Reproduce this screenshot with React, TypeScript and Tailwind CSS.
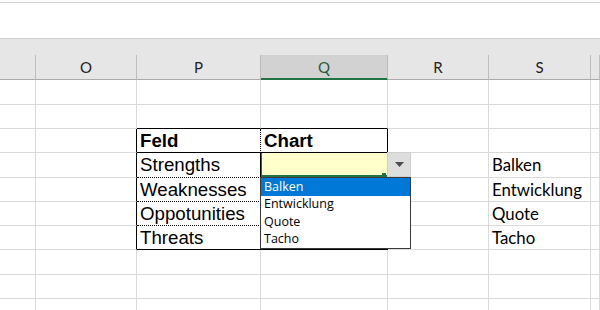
import React from 'react';

const cols = ['', 'O', 'P', 'Q', 'R', 'S', ''];
const rowHeights = ['h-[25px]', 'h-[24px]', 'h-[24px]', 'h-[25px]', 'h-[24px]', 'h-[24px]', 'h-[24px]', 'h-[25px]', 'h-[24px]', 'h-[24px]'];

const tableText: Record<number, string> = {
  3: 'Strengths',
  4: 'Weaknesses',
  5: 'Oppotunities',
  6: 'Threats',
};

const sideList: Record<number, string> = {
  3: 'Balken',
  4: 'Entwicklung',
  5: 'Quote',
  6: 'Tacho',
};

const options = ['Balken', 'Entwicklung', 'Quote', 'Tacho'];

// border classes per cell, spelled out so tailwind picks them up
function cellBorder(r: number, c: number) {
  const base = 'border-r border-b border-[#dadada]';
  if (c === 1 && r >= 2 && r <= 6) return 'border-r border-b border-b-[#dadada] border-r-black';
  if ((c === 2 || c === 3) && r === 1) return 'border-r border-b border-r-[#dadada] border-b-black';
  if (c === 2) {
    if (r === 2) return 'border-r border-b border-black [border-right-style:dotted]';
    if (r >= 3 && r <= 5) return 'border-r border-b border-black [border-bottom-style:dotted]';
    if (r === 6) return 'border-r border-b border-black';
  }
  if (c === 3) {
    if (r === 2 || r === 6) return 'border-r border-b border-black';
    if (r === 4 || r === 5) return 'border-r border-b border-r-black border-b-[#dadada]';
  }
  return base;
}

function Cell({ r, c }: { r: number; c: number }) {
  const border = cellBorder(r, c);

  if (c === 3 && r === 3) {
    return (
      <div className="relative border-r border-b border-[#dadada] bg-[#ffffcc] shadow-[inset_1px_0_0_#217346,inset_0_-2px_0_#217346]">
        <div className="absolute right-[1px] bottom-0 w-[4px] h-[4px] bg-[#217346]" />
      </div>
    );
  }

  let content: React.ReactNode = null;
  if (c === 2 && r === 2) content = <span className="font-bold">Feld</span>;
  if (c === 3 && r === 2) content = <span className="font-bold">Chart</span>;
  if (c === 2 && tableText[r]) content = tableText[r];

  if (content) {
    return (
      <div className={`${border} flex items-center pl-[3px] pt-[1px] text-[18.7px] leading-none text-black font-['Liberation_Sans',Arial,sans-serif] whitespace-nowrap overflow-hidden`}>
        {content}
      </div>
    );
  }

  if (c === 5 && sideList[r]) {
    return (
      <div className={`${border} flex items-center pl-[3px] pt-[1px] text-[16.8px] leading-none text-black font-['Lato','Open_Sans',sans-serif] whitespace-nowrap`}>
        {sideList[r]}
      </div>
    );
  }

  return <div className={border} />;
}

export default function App() {
  return (
    <div className="w-[600px] h-[310px] overflow-hidden bg-white">
      {/* ribbon / formula bar remainder */}
      <div className="h-[2px]" />
      <div className="h-[36px] border-t border-[#d4d4d4]" />

      {/* column header */}
      <div className="h-[17px] border-t border-[#cfcfcf] bg-[#e6e6e6]" />
      <div className="grid grid-cols-[36px_101px_124px_127px_101px_102px_1fr] h-[25px] bg-[#e6e6e6] font-['Lato','Open_Sans',sans-serif] text-[15px]">
        {cols.map((name, i) =>
          name === 'Q' ? (
            <div key={i} className="flex items-center justify-center border-r border-b border-r-[#bdbdbd] border-b-[#217346] bg-[#d2d2d2] text-[#1e5f3b] shadow-[inset_0_-1px_0_#217346]">
              {name}
            </div>
          ) : (
            <div key={i} className="flex items-center justify-center border-r border-b border-r-[#bdbdbd] border-b-[#ababab] text-[#222]">
              {name}
            </div>
          )
        )}
      </div>

      {/* sheet body */}
      <div className="relative">
        <div className="grid grid-cols-[36px_101px_124px_127px_101px_102px_1fr]">
          {rowHeights.map((h, r) => (
            <React.Fragment key={r}>
              {cols.map((_, c) => (
                <div key={c} className={`${h} grid`}>
                  <Cell r={r} c={c} />
                </div>
              ))}
            </React.Fragment>
          ))}
        </div>

        {/* validation dropdown button */}
        <div className="absolute left-[387px] top-[72px] w-[24px] h-[25px] bg-[#dedede] border border-[#cfcfcf] flex items-center justify-center">
          <svg width="9" height="5" viewBox="0 0 9 5">
            <polygon points="0,0 9,0 4.5,5" fill="#4d4d4d" />
          </svg>
        </div>

        {/* open list */}
        <div className="absolute left-[260px] top-[97px] w-[151px] h-[72px] bg-white border border-[#3a3a3a] flex flex-col font-['Open_Sans','DejaVu_Sans',sans-serif] text-[12.5px] leading-none">
          {options.map((o, i) => (
            <div
              key={o}
              className={
                i === 0
                  ? 'h-[17.5px] flex items-center pl-[3px] bg-[#0078d7] text-white'
                  : 'h-[17.5px] flex items-center pl-[3px] text-black'
              }
            >
              {o}
            </div>
          ))}
        </div>
      </div>
    </div>
  );
}
